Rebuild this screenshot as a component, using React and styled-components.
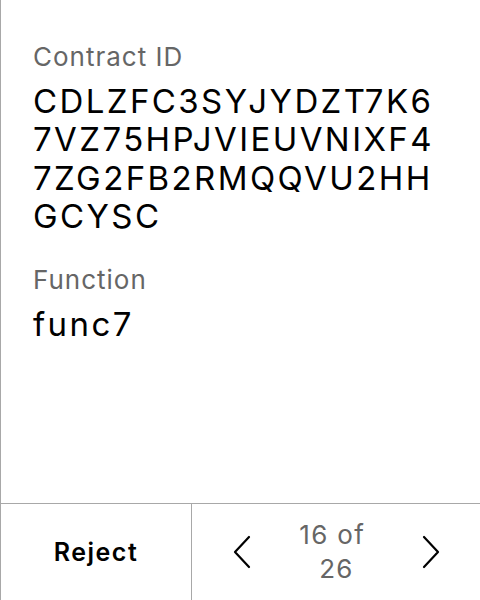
import React from 'react'
import styled, { createGlobalStyle } from 'styled-components'

const GlobalStyle = createGlobalStyle`
  html, body {
    margin: 0;
    padding: 0;
    background: #fff;
  }
  body {
    font-family: Inter, "Noto Sans", sans-serif;
  }
`

const contract = {
  id: 'CDLZFC3SYJYDZT7K67VZ75HPJVIEUVNIXF47ZG2FB2RMQQVU2HHGCYSC',
  fn: 'func7',
  index: 16,
  total: 26,
}

function Chevron({ dir }) {
  return (
    <svg width="18" height="34" viewBox="0 0 18 34" fill="none">
      <path
        d={dir === 'left' ? 'M16 2 L2 17 L16 32' : 'M2 2 L16 17 L2 32'}
        stroke="#000"
        strokeWidth="2.2"
        strokeLinecap="round"
        strokeLinejoin="round"
      />
    </svg>
  )
}

function App() {
  return (
    <>
      <GlobalStyle />
      <Screen>
        <Details>
          <Field>
            <Label>Contract ID</Label>
            <Value $breakAll>{contract.id}</Value>
          </Field>
          <Field>
            <Label>Function</Label>
            <Value>{contract.fn}</Value>
          </Field>
        </Details>
        <Footer>
          <RejectButton>Reject</RejectButton>
          <Pager>
            <NavButton aria-label="previous">
              <Chevron dir="left" />
            </NavButton>
            <PageCount>
              {`${contract.index} of ${contract.total}`}
            </PageCount>
            <NavButton aria-label="next">
              <Chevron dir="right" />
            </NavButton>
          </Pager>
        </Footer>
      </Screen>
    </>
  )
}

const Screen = styled.div`
  height: 600px;
  display: flex;
  flex-direction: column;
  border-left: 1px solid #a8a8a8;
  box-sizing: border-box;
`

const Details = styled.div`
  flex: 1;
  display: flex;
  flex-direction: column;
  gap: 31px;
  padding: 43px 37px 0 32px;
`

const Field = styled.div`
  display: flex;
  flex-direction: column;
  gap: 10px;
`

const Label = styled.div`
  font-size: 26px;
  line-height: 28.8px;
  letter-spacing: 1px;
  color: #666;
`

const Value = styled.div`
  font-size: 33px;
  line-height: 38.4px;
  letter-spacing: 2.4px;
  color: #000;
  word-break: ${(p) => (p.$breakAll ? 'break-all' : 'normal')};
`

const Footer = styled.div`
  height: 96px;
  display: grid;
  grid-template-columns: 191px 1fr;
  border-top: 1px solid #a8a8a8;
`

const RejectButton = styled.button`
  all: unset;
  display: flex;
  align-items: center;
  justify-content: center;
  font-family: Inter, sans-serif;
  font-size: 25px;
  font-weight: 600;
  letter-spacing: 1.5px;
  color: #000;
  border-right: 1px solid #a8a8a8;
`

const Pager = styled.div`
  display: flex;
  align-items: center;
  justify-content: space-between;
  padding: 0 40px 0 41px;
`

const NavButton = styled.button`
  all: unset;
  display: flex;
  align-items: center;
`

const PageCount = styled.div`
  width: 96px;
  text-align: center;
  white-space: break-spaces;
  font-size: 26px;
  line-height: 34px;
  letter-spacing: 1.3px;
  color: #666;
`

export default App
